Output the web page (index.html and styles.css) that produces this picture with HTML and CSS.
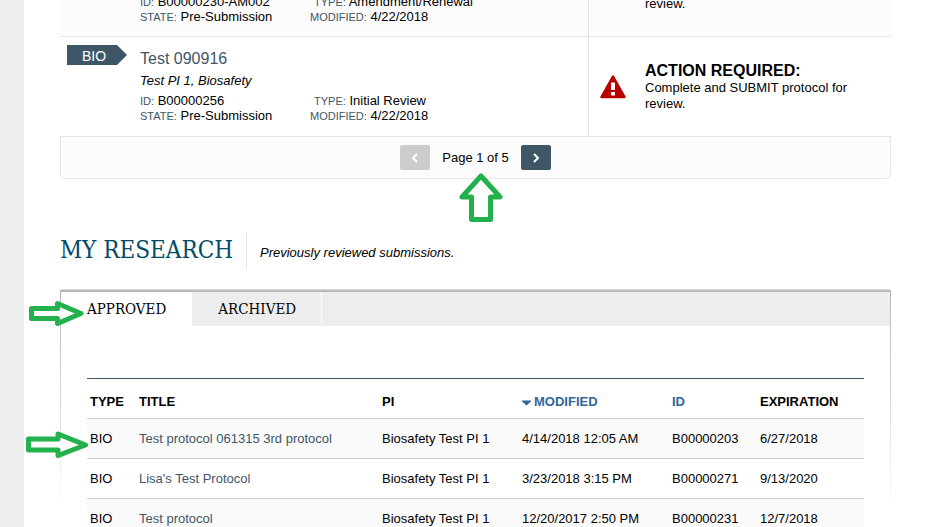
FILE: index.html
```html
<!DOCTYPE html>
<html lang="en">
<head>
    <meta charset="UTF-8">
    <meta name="viewport" content="width=device-width, initial-scale=1.0">
    <title>My Research</title>
    <link rel="stylesheet" href="styles.css">
</head>
<body>
    <main class="page">
        <section class="inbox">
            <div class="item item-cut">
                <div class="item-main">
                    <div class="details">
                        <div class="meta">
                            <div><span class="label">ID:</span> B00000230-AM002</div>
                            <div><span class="label indent">TYPE:</span> Amendment/Renewal</div>
                            <div><span class="label">STATE:</span> Pre-Submission</div>
                            <div><span class="label">MODIFIED:</span> 4/22/2018</div>
                        </div>
                    </div>
                </div>
                <div class="item-action">
                    <p>review.</p>
                </div>
            </div>
            <div class="item">
                <div class="item-main">
                    <span class="flag">BIO</span>
                    <div class="details">
                        <a class="item-title" href="#">Test 090916</a>
                        <div class="owner">Test PI 1, Biosafety</div>
                        <div class="meta">
                            <div><span class="label">ID:</span> B00000256</div>
                            <div><span class="label indent">TYPE:</span> Initial Review</div>
                            <div><span class="label">STATE:</span> Pre-Submission</div>
                            <div><span class="label">MODIFIED:</span> 4/22/2018</div>
                        </div>
                    </div>
                </div>
                <div class="item-action">
                    <svg class="warning" width="26" height="24" viewBox="0 0 26 24">
                        <path d="M13 1.5 L24.5 22 H1.5 Z" fill="#b90000" stroke="#b90000" stroke-width="2.5" stroke-linejoin="round"/>
                        <path d="M11 7.5 h4 v7.5 h-4 Z M11 17 h4 v3.5 h-4 Z" fill="#fff"/>
                    </svg>
                    <div>
                        <h2>ACTION REQUIRED:</h2>
                        <p>Complete and SUBMIT protocol for review.</p>
                    </div>
                </div>
            </div>
            <div class="pager">
                <button type="button" aria-label="Previous page" disabled>
                    <svg width="8" height="10" viewBox="0 0 8 10"><path d="M6 1 L2 5 L6 9"/></svg>
                </button>
                <span>Page 1 of 5</span>
                <button type="button" aria-label="Next page">
                    <svg width="8" height="10" viewBox="0 0 8 10"><path d="M2 1 L6 5 L2 9"/></svg>
                </button>
                <svg class="arrow arrow-up" width="44" height="51" viewBox="0 0 44 51">
                    <path d="M22 4 L41 25 H31.5 V47.5 H12.5 V25 H3 Z"/>
                </svg>
            </div>
        </section>

        <header class="section-head">
            <h1>MY RESEARCH</h1>
            <p>Previously reviewed submissions.</p>
        </header>

        <section class="panel">
            <nav class="tabs">
                <a class="active" href="#">APPROVED</a>
                <a href="#">ARCHIVED</a>
            </nav>
            <svg class="arrow arrow-tab" width="57" height="27" viewBox="0 0 57 27">
                <path d="M3.5 8.5 H29.5 V3.5 L53 13.5 L29.5 23.5 V18.5 H3.5 Z"/>
            </svg>
            <table>
                <thead>
                    <tr>
                        <th class="col-type">TYPE</th>
                        <th>TITLE</th>
                        <th class="col-pi">PI</th>
                        <th class="col-modified"><a href="#"><svg width="9" height="6" viewBox="0 0 9 6"><path d="M0 0.5 H9 V1.5 L4.5 5.5 L0 1.5 Z" fill="#2f6799"/></svg>MODIFIED</a></th>
                        <th class="col-id"><a href="#">ID</a></th>
                        <th class="col-expiration">EXPIRATION</th>
                    </tr>
                </thead>
                <tbody>
                    <tr>
                        <td>BIO</td>
                        <td><a href="#">Test protocol 061315 3rd protocol</a></td>
                        <td>Biosafety Test PI 1</td>
                        <td>4/14/2018 12:05 AM</td>
                        <td>B00000203</td>
                        <td>6/27/2018</td>
                    </tr>
                    <tr>
                        <td>BIO</td>
                        <td><a href="#">Lisa's Test Protocol</a></td>
                        <td>Biosafety Test PI 1</td>
                        <td>3/23/2018 3:15 PM</td>
                        <td>B00000271</td>
                        <td>9/13/2020</td>
                    </tr>
                    <tr>
                        <td>BIO</td>
                        <td><a href="#">Test protocol</a></td>
                        <td>Biosafety Test PI 1</td>
                        <td>12/20/2017 2:50 PM</td>
                        <td>B00000231</td>
                        <td>12/7/2018</td>
                    </tr>
                </tbody>
            </table>
            <svg class="arrow arrow-row" width="63" height="28" viewBox="0 0 63 28">
                <path d="M2.5 8 H32 V3 L59.5 14 L32 24.5 V19 H2.5 Z"/>
            </svg>
        </section>
    </main>
</body>
</html>
```

FILE: styles.css
```css
body {
    margin: 0;
    font-family: "Liberation Sans", Arial, sans-serif;
    font-size: 13px;
    line-height: 15px;
    color: #000;
    background-color: #fff;
    overflow: hidden;
}
.page {
    box-sizing: border-box;
    min-height: 100vh;
    padding: 0 34px 0 36px;
    border-left: 24px solid #efefef;
}
h1, h2, p {
    margin: 0;
}
a {
    color: #3f5666;
    text-decoration: none;
}

/* submission list */
.item {
    display: flex;
    height: 99px;
    border-bottom: 1px solid #e7e7e7;
}
.item-cut {
    height: 36px;
    overflow: hidden;
    background-color: #fcfcfc;
}
.item-main {
    flex: 1;
    display: flex;
    align-items: flex-start;
    padding: 8px 0 0 7px;
}
.flag {
    width: 60px;
    height: 20px;
    box-sizing: border-box;
    padding: 4px 0 0 15px;
    font-size: 14px;
    color: #fff;
    background-color: #3f5666;
    clip-path: polygon(0 0, 50px 0, 100% 50%, 50px 100%, 0 100%);
}
.details {
    flex: 1;
    margin-left: 13px;
    padding-top: 4px;
}
.item-title {
    display: block;
    font-size: 16px;
    line-height: 20px;
}
.owner {
    margin: 4px 0 5px;
    font-style: italic;
}
.meta {
    display: grid;
    grid-template-columns: 170px 1fr;
}
.label {
    font-size: 11px;
    line-height: 11px;
    color: #3f5666;
}
.indent {
    margin-left: 4px;
}
.item-action {
    width: 303px;
    box-sizing: border-box;
    display: flex;
    align-items: center;
    gap: 19px;
    padding: 0 20px 0 11px;
    border-left: 1px solid #e7e7e7;
    line-height: 16px;
}
.item-action h2 {
    font-size: 16px;
    line-height: 18px;
}
.warning {
    flex: none;
}
.item-cut .item-main,
.item-cut .item-action {
    align-items: flex-end;
}
.item-cut .item-main {
    padding: 0 0 12px 67px;
}
.item-cut .item-action {
    padding: 0 0 24px 56px;
}

.pager {
    position: relative;
    display: flex;
    justify-content: center;
    align-items: center;
    gap: 12px;
    height: 41px;
    background-color: #fcfcfc;
    border: 1px solid #e7e7e7;
    border-top: none;
    border-radius: 0 0 5px 5px;
}
.pager button {
    display: flex;
    justify-content: center;
    align-items: center;
    width: 30px;
    height: 25px;
    padding: 0;
    border: none;
    border-radius: 2px;
    background-color: #3f5666;
    cursor: pointer;
}
.pager button:disabled {
    background-color: #ccc;
    cursor: default;
}
.pager button path {
    fill: none;
    stroke: #fff;
    stroke-width: 2;
}

/* section heading */
.section-head {
    display: flex;
    align-items: center;
    margin: 53px 0 20px;
}
.section-head h1 {
    padding-right: 13px;
    border-right: 1px solid #e7e7e7;
    font-family: "Roboto Slab", "DejaVu Serif Condensed", "DejaVu Serif", serif;
    font-size: 24px;
    font-weight: normal;
    line-height: 37px;
    color: #004b66;
}
.section-head p {
    margin: 4px 0 0 13px;
    font-style: italic;
}

/* tabbed panel, side lines fade out downwards */
.panel {
    position: relative;
    padding: 3px 1px 0;
    border-radius: 2px 2px 0 0;
    background-image:
        linear-gradient(#e0e0e0, #b4b4b4 2px),
        linear-gradient(#b4b4b4, #fff),
        linear-gradient(#b4b4b4, #fff);
    background-position: 0 0, 0 0, 100% 0;
    background-size: 100% 3px, 1px 220px, 1px 220px;
    background-repeat: no-repeat;
}
.tabs {
    display: flex;
    background-color: #ededed;
}
.tabs a {
    padding: 0 25px 0 26px;
    border-right: 1px solid #fff;
    font-family: "Roboto Slab", "DejaVu Serif Condensed", "DejaVu Serif", serif;
    font-size: 15px;
    line-height: 34px;
    color: #000;
}
.tabs .active {
    background-color: #fff;
}
table {
    width: calc(100% - 52px);
    margin: 52px 26px 0;
    table-layout: fixed;
    border-collapse: separate;
    border-spacing: 0;
    border-top: 1px solid #3f5666;
}
th, td {
    height: 39px;
    padding: 0 3px;
    border-bottom: 1px solid #ccc;
    text-align: left;
}
th {
    padding-top: 6px;
    height: 33px;
}
th a {
    color: #2f6799;
}
th svg {
    margin-right: 3px;
}
tbody tr:nth-child(odd) {
    background-color: #fafafa;
}
.col-type {
    width: 43px;
}
.col-pi {
    width: 134px;
}
.col-modified {
    width: 144px;
}
.col-id {
    width: 82px;
}
.col-expiration {
    width: 101px;
}

/* callout arrows over the page */
.arrow {
    position: absolute;
}
.arrow path {
    fill: #fff;
    stroke: #22b14c;
    stroke-width: 5;
    stroke-linejoin: round;
}
.arrow-up {
    top: 35px;
    left: calc(50% - 17px);
}
.arrow-tab {
    top: 11px;
    left: -32px;
}
.arrow-row {
    top: 142px;
    left: -34px;
}
```
